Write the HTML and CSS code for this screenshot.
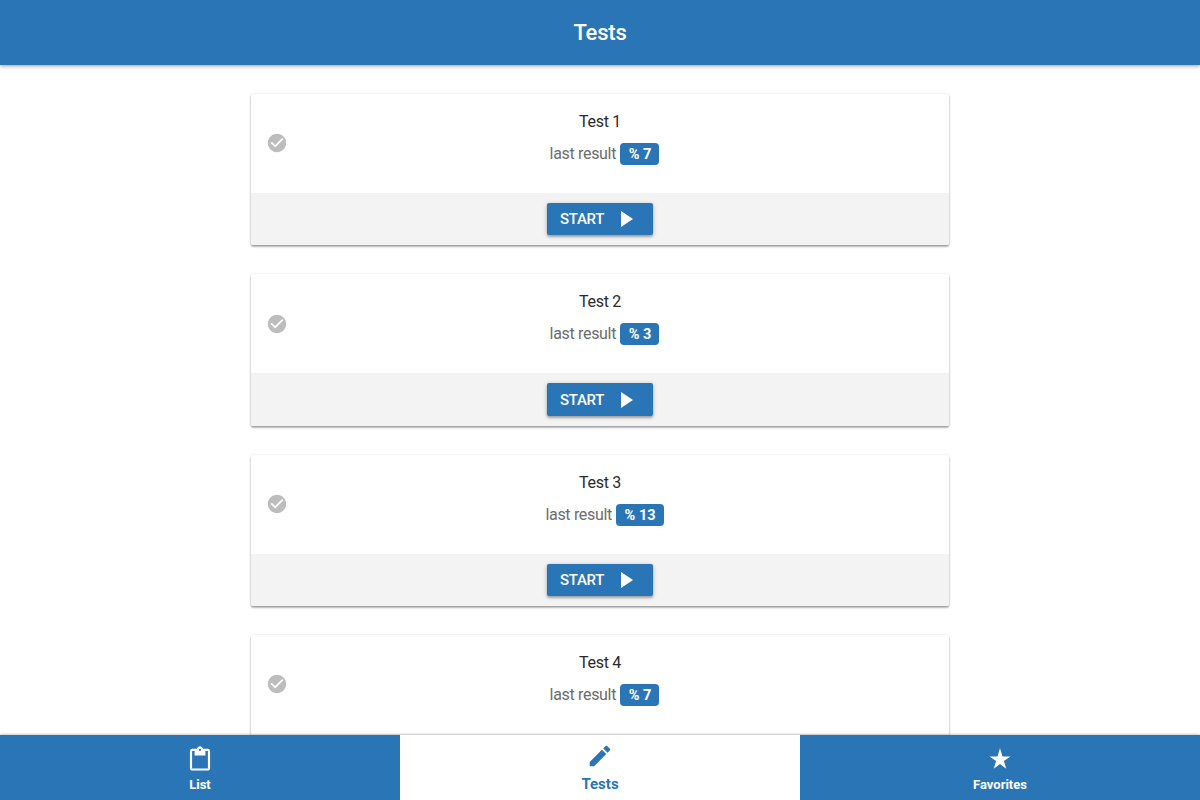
FILE: index.html
```html
<!DOCTYPE html>
<html lang="en">
<head>
    <meta charset="utf-8">
    <title>Tests</title>
    <link rel="stylesheet" href="styles.css">
</head>
<body>
    <svg class="sprite">
        <symbol id="check" viewBox="0 0 24 24"><path d="M12 2C6.500 2 2 6.500 2 12s4.500 10 10 10 10-4.500 10-10S17.500 2 12 2zm-2 15l-5-5 1.400-1.400 3.600 3.600 7.600-7.600L19 8l-9 9z"/></symbol>
        <symbol id="play" viewBox="0 0 12 16"><path d="M0 0v16l12-8z"/></symbol>
    </svg>

    <header class="toolbar">
        <h1>Tests</h1>
    </header>

    <main class="content">
        <div class="card">
            <div class="card-body">
                <svg class="check"><use href="#check"/></svg>
                <h2>Test 1</h2>
                <p>last result <span class="badge">% 7</span></p>
            </div>
            <div class="card-footer">
                <button class="start">START <svg><use href="#play"/></svg></button>
            </div>
        </div>
        <div class="card">
            <div class="card-body">
                <svg class="check"><use href="#check"/></svg>
                <h2>Test 2</h2>
                <p>last result <span class="badge">% 3</span></p>
            </div>
            <div class="card-footer">
                <button class="start">START <svg><use href="#play"/></svg></button>
            </div>
        </div>
        <div class="card">
            <div class="card-body">
                <svg class="check"><use href="#check"/></svg>
                <h2>Test 3</h2>
                <p>last result <span class="badge">% 13</span></p>
            </div>
            <div class="card-footer">
                <button class="start">START <svg><use href="#play"/></svg></button>
            </div>
        </div>
        <div class="card">
            <div class="card-body">
                <svg class="check"><use href="#check"/></svg>
                <h2>Test 4</h2>
                <p>last result <span class="badge">% 7</span></p>
            </div>
            <div class="card-footer"></div>
        </div>
    </main>

    <nav class="tabs">
        <a class="tab">
            <svg viewBox="0 0 24 24"><path d="M19.300 2.500h-4.500C14.400 1.200 13.300.3 12 .3s-2.400.9-2.800 2.200H4.700c-1.100 0-2 .9-2 2v16.200c0 1.100.9 2 2 2h14.600c1.100 0 2-.9 2-2V4.500c0-1.100-.9-2-2-2zm-7.300 0c.6 0 1 .4 1 1s-.4 1-1 1-1-.4-1-1 .4-1 1-1zm7.300 18.200H4.700V4.500H7v4.200h10V4.500h2.300v16.200z"/></svg>
            <span>List</span>
        </a>
        <a class="tab active">
            <svg viewBox="0 0 24 24"><path d="M2.500 17.500v4h4L17.800 10.200l-4-4L2.500 17.500zM21.200 6.800c.4-.4.4-1 0-1.400l-2.600-2.600c-.4-.4-1-.4-1.400 0l-2.200 2.200 4 4 2.200-2.200z"/></svg>
            <span>Tests</span>
        </a>
        <a class="tab">
            <svg viewBox="0 0 24 24"><path d="M12 16.700l5.800 4.200-2.200-7 6-4.300h-7.300L12 2l-2.300 7.600H2.400l6 4.300-2.200 7z"/></svg>
            <span>Favorites</span>
        </a>
    </nav>
</body>
</html>
```
FILE: styles.css
```css
* {
    box-sizing: border-box;
}

body {
    height: 100vh;
    margin: 0;
    display: flex;
    flex-direction: column;
    overflow: hidden;
    font-family: Roboto, sans-serif;
    background-color: #fff;
}

.sprite {
    display: none;
}

.toolbar {
    flex: none;
    height: 65px;
    display: flex;
    align-items: center;
    justify-content: center;
    background-color: #2a75b6;
    box-shadow: 0 1px 4px rgba(0, 0, 0, .4);
    z-index: 1;
}

.toolbar h1 {
    margin: 0;
    font-size: 22px;
    font-weight: 500;
    letter-spacing: -.2px;
    color: #fff;
}

.content {
    flex: 1;
    min-height: 0;
    overflow: hidden;
    padding-top: 29px;
}

.card {
    width: 698px;
    margin: 0 auto 28.900px;
    border-radius: 2px;
    background-color: #fff;
    box-shadow: 0 2px 2px rgba(0, 0, 0, .22), 0 1px 2px rgba(0, 0, 0, .22), 0 0 3px rgba(0, 0, 0, .08);
    overflow: hidden;
}

.card-body {
    position: relative;
    height: 99.200px;
    padding-top: 17px;
    text-align: center;
    font-size: 16px;
    letter-spacing: -.32px;
}

/* status mark on the left side of the card */
.check {
    position: absolute;
    left: 15px;
    top: 38.400px;
    width: 22px;
    height: 22px;
    fill: #bdbdbd;
}

.card-body h2 {
    margin: 0;
    font-size: 16px;
    font-weight: 400;
    line-height: 21px;
    color: #2a2a2a;
}

.card-body p {
    margin: 11px 0 0;
    padding-left: 9px;
    line-height: 22px;
    color: #6c6c6c;
}

.badge {
    display: inline-block;
    height: 22px;
    padding: 0 8px 0 9px;
    border-radius: 4px;
    font-size: 14.500px;
    font-weight: 700;
    line-height: 23px;
    letter-spacing: 0;
    color: #fff;
    background-color: #2a75b6;
    vertical-align: top;
}

.card-footer {
    height: 52.200px;
    padding-top: 9.900px;
    display: flex;
    align-items: flex-start;
    justify-content: center;
    background-color: #f3f3f3;
}

.start {
    width: 106px;
    height: 32.400px;
    padding: 0 20px 0 13px;
    display: flex;
    align-items: center;
    justify-content: space-between;
    border: none;
    border-radius: 2px;
    font-family: inherit;
    font-size: 15px;
    font-weight: 500;
    letter-spacing: -.3px;
    color: #fff;
    background-color: #2a75b6;
    box-shadow: 0 2px 2px rgba(0, 0, 0, .2), 0 1px 4px rgba(0, 0, 0, .25);
    cursor: pointer;
}

.start svg {
    width: 12px;
    height: 16px;
    fill: #fff;
}

.tabs {
    flex: none;
    height: 65px;
    display: flex;
    box-shadow: 0 -1px 2px rgba(0, 0, 0, .2);
    z-index: 1;
}

.tab {
    flex: 1;
    padding-top: 11px;
    display: flex;
    flex-direction: column;
    align-items: center;
    font-size: 13px;
    font-weight: 700;
    line-height: 16px;
    color: #fff;
    background-color: #2a75b6;
    cursor: pointer;
}

.tab svg {
    width: 26px;
    height: 26px;
    margin-bottom: 5px;
    fill: currentColor;
}

.tab.active {
    padding-top: 8px;
    font-size: 15px;
    color: #2a75b6;
    background-color: #fff;
}

.tab.active svg {
    margin-bottom: 7px;
}
```
